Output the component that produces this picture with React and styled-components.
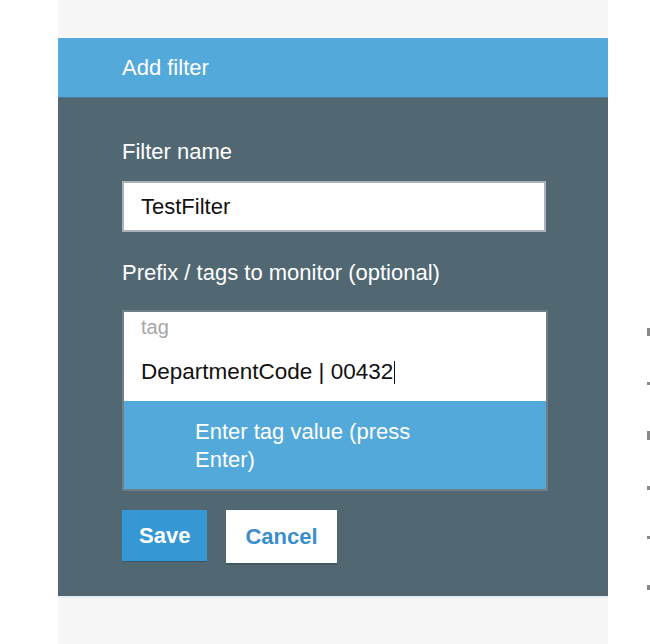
import React from "react";
import styled, { createGlobalStyle } from "styled-components";

const GlobalStyle = createGlobalStyle`
  html, body {
    margin: 0;
    padding: 0;
    background: #fff;
    font-family: "Liberation Sans", Arial, sans-serif;
  }
`;

function TagInput({ label, value, hint }) {
  return (
    <TagBox>
      <TagField>
        <TagLabel>{label}</TagLabel>
        <TagValue>
          {value}
          <Caret />
        </TagValue>
      </TagField>
      <Hint>{hint}</Hint>
    </TagBox>
  );
}

function App() {
  return (
    <Page>
      <GlobalStyle />
      <Panel>
        <TopStrip />
        <Header>Add filter</Header>
        <Body>
          <Label>Filter name</Label>
          <TextInput value="TestFilter" readOnly />
          <Label>Prefix / tags to monitor (optional)</Label>
          <TagInput
            label="tag"
            value="DepartmentCode | 00432"
            hint={"Enter tag value (press Enter)"}
          />
          <Actions>
            <Btn primary>Save</Btn>
            <Btn>Cancel</Btn>
          </Actions>
        </Body>
        <BottomStrip />
      </Panel>
      <Edge>
        {[8, 3, 9, 4, 3, 5].map((h, i) => (
          <Mark key={i} h={h} />
        ))}
      </Edge>
    </Page>
  );
}
export default App;

const Page = styled.div`
  width: 650px;
  height: 644px;
  display: flex;
  overflow: hidden;
  padding-left: 58px;
  box-sizing: border-box;
`;

const Panel = styled.div`
  width: 550px;
  display: flex;
  flex-direction: column;
`;

const TopStrip = styled.div`
  height: 37px;
  background: #f7f7f7;
  border-bottom: 1px solid #fbfbf3;
`;

const Header = styled.div`
  height: 59px;
  background: #53a9da;
  color: #fff;
  font-size: 22px;
  display: flex;
  align-items: center;
  padding-left: 64px;
  border-bottom: 1px solid #4b7a92;
`;

const Body = styled.div`
  background: #516873;
  padding: 43px 62px 33px 64px;
  display: flex;
  flex-direction: column;
`;

const BottomStrip = styled.div`
  flex: 1;
  background: #f7f7f7;
  border-top: 2px solid #e4eef4;
`;

const Label = styled.div`
  color: #fff;
  font-size: 22px;
  line-height: 22px;
  margin-bottom: 18px;
`;

const TextInput = styled.input`
  box-sizing: border-box;
  width: 424px;
  height: 51px;
  border: 2px solid #a8b2b8;
  background: #fff;
  font-family: "Liberation Sans", Arial, sans-serif;
  font-size: 22px;
  color: #111;
  padding: 0 17px;
  margin: 0 0 30px;
  outline: none;
`;

const TagBox = styled.div`
  width: 426px;
  margin-top: 8px;
  border: 2px solid #6f7f88;
  box-sizing: border-box;
`;

const TagField = styled.div`
  background: #fff;
  height: 89px;
  padding: 4px 17px 0;
  box-sizing: border-box;
`;

const TagLabel = styled.div`
  color: #a6a6a6;
  font-size: 20px;
  line-height: 22px;
`;

const TagValue = styled.div`
  color: #111;
  font-size: 22.5px;
  line-height: 24px;
  margin-top: 22px;
  display: flex;
  align-items: center;
`;

const Caret = styled.span`
  width: 1px;
  height: 23px;
  background: #111;
  margin-left: 1px;
`;

const Hint = styled.div`
  background: #53a9da;
  color: #fff;
  font-size: 22px;
  line-height: 28px;
  box-sizing: border-box;
  height: 88px;
  padding: 17px 0 0 71px;
  padding-right: 120px;
`;

const Actions = styled.div`
  display: flex;
  gap: 19px;
  margin-top: 19px;
`;

const Btn = styled.button`
  height: ${(p) => (p.primary ? "51px" : "53px")};
  padding: 0 ${(p) => (p.primary ? "17px" : "19px")};
  border: none;
  background: ${(p) => (p.primary ? "#3598d4" : "#fff")};
  color: ${(p) => (p.primary ? "#fff" : "#3a8fcb")};
  font-family: "Liberation Sans", Arial, sans-serif;
  font-size: 22px;
  font-weight: ${(p) => (p.primary ? 700 : 600)};
  box-shadow: ${(p) => (p.primary ? "0 1px 0 #3b5563" : "0 2px 0 #435862")};
`;

const Edge = styled.div`
  flex: 1;
  display: flex;
  flex-direction: column;
  align-items: flex-end;
  padding-top: 328px;
  gap: 46px;
`;

const Mark = styled.div`
  width: 3px;
  height: ${(p) => p.h}px;
  background: #888;
`;
